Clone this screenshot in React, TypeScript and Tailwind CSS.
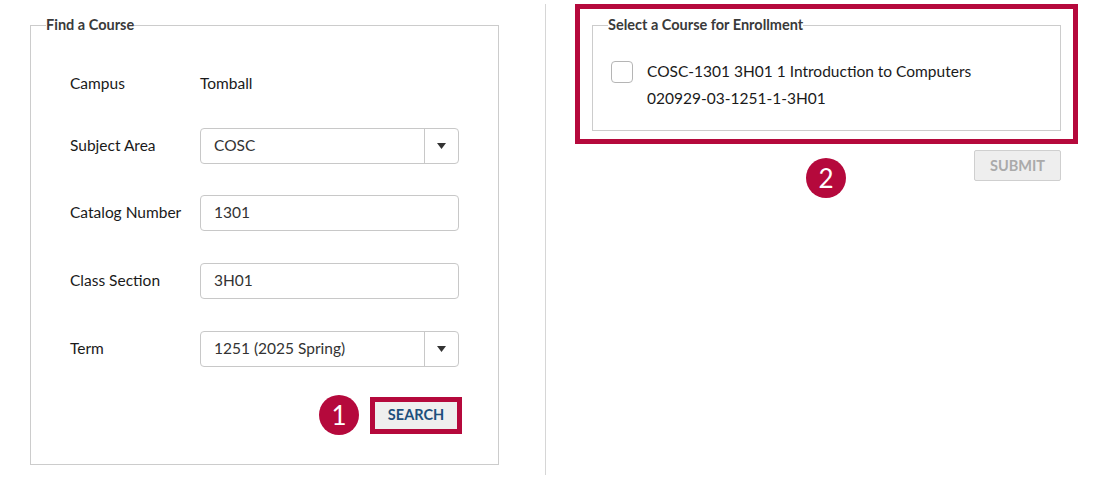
import React from "react";

const RED = "bg-[#b5093c]";

function Caret() {
  return (
    <svg width="9" height="6" viewBox="0 0 9 6" className="block">
      <path d="M0 0 L9 0 L4.5 6 Z" fill="#333" />
    </svg>
  );
}

function Select({ value }: { value: string }) {
  return (
    <div className="flex h-[36px] w-[259px] rounded-[4px] border border-[#c8c8c8] bg-white">
      <div className="flex flex-1 items-center pl-[13px] text-[15.5px] text-[#333]">{value}</div>
      <div className="flex w-[34px] items-center justify-center border-l border-[#c8c8c8]">
        <Caret />
      </div>
    </div>
  );
}

function Input({ value }: { value: string }) {
  return (
    <div className="flex h-[36px] w-[259px] items-center rounded-[4px] border border-[#c8c8c8] bg-white pl-[13px] text-[15.5px] text-[#333]">
      {value}
    </div>
  );
}

function Row({ label, children, className = "" }: { label: string; children: React.ReactNode; className?: string }) {
  return (
    <div className={"flex h-[36px] items-center " + className}>
      <div className="w-[130px] text-[15.5px] text-[#1a1a1a]">{label}</div>
      {children}
    </div>
  );
}

function Badge({ n }: { n: string }) {
  return (
    <div className={"flex h-[40px] w-[40px] items-center justify-center rounded-full text-[26px] leading-none text-white " + RED}>
      {n}
    </div>
  );
}

export default function App() {
  return (
    <div
      className="flex h-[480px] w-[1108px] bg-white"
      style={{ fontFamily: "Lato, 'Liberation Sans', sans-serif" }}
    >
      <div className="w-[545px] pl-[30px] pt-[15px]">
        <fieldset className="m-0 h-[450px] w-[469px] border border-[#cccccc] px-[39px] pb-0 pt-0">
          <legend className="ml-[-24px] px-0 text-[14.5px] font-bold leading-[20px] text-[#3a3a3a]">Find a Course</legend>
          <div className="mt-[31px]">
            <Row label="Campus">
              <span className="text-[15.5px] text-[#1a1a1a]">Tomball</span>
            </Row>
            <Row label="Subject Area" className="mt-[26px]">
              <Select value="COSC" />
            </Row>
            <Row label="Catalog Number" className="mt-[31px]">
              <Input value="1301" />
            </Row>
            <Row label="Class Section" className="mt-[32px]">
              <Input value="3H01" />
            </Row>
            <Row label="Term" className="mt-[32px]">
              <Select value="1251 (2025 Spring)" />
            </Row>
            <div className="mr-[-3px] mt-[28px] flex items-center justify-end gap-[11px]">
              <Badge n="1" />
              <div className={"p-[5px] " + RED}>
                <div className="flex h-[27px] w-[82px] items-center justify-center bg-[#efefef] text-[14.5px] font-bold text-[#1d4f7c]">
                  SEARCH
                </div>
              </div>
            </div>
          </div>
        </fieldset>
      </div>
      <div className="mt-[4px] h-[471px] w-px bg-[#d6d6d6]" />
      <div className="pl-[29px] pt-[4px]">
        <div className={"w-[503px] p-[5px] " + RED}>
          <div className="bg-white px-[12px] pb-[8px] pt-[6px]">
            <fieldset className="m-0 h-[116px] border border-[#cccccc] px-[18px] pb-0 pt-0">
              <legend className="ml-[-3px] px-0 text-[14.5px] font-bold leading-[20px] text-[#3a3a3a]">
                Select a Course for Enrollment
              </legend>
              <div className="mt-[25px] flex">
                <div className="mt-[1px] h-[22px] w-[22px] rounded-[4px] border border-[#b5b5b5] bg-white" />
                <div className="ml-[14px] text-[15.5px] leading-[27px] text-[#1a1a1a]" style={{ marginTop: -2 }}>
                  <div>COSC-1301 3H01 1 Introduction to Computers</div>
                  <div>020929-03-1251-1-3H01</div>
                </div>
              </div>
            </fieldset>
          </div>
        </div>
        <div className="relative mt-[6px] flex w-[486px] justify-end">
          <div className="absolute left-[231px] top-[8px]">
            <Badge n="2" />
          </div>
          <div className="flex h-[31px] w-[87px] items-center justify-center rounded-[2px] border border-[#cfcfcf] bg-[#eeeeee] text-[14.5px] font-bold text-[#aaaaaa]">
            SUBMIT
          </div>
        </div>
      </div>
    </div>
  );
}
